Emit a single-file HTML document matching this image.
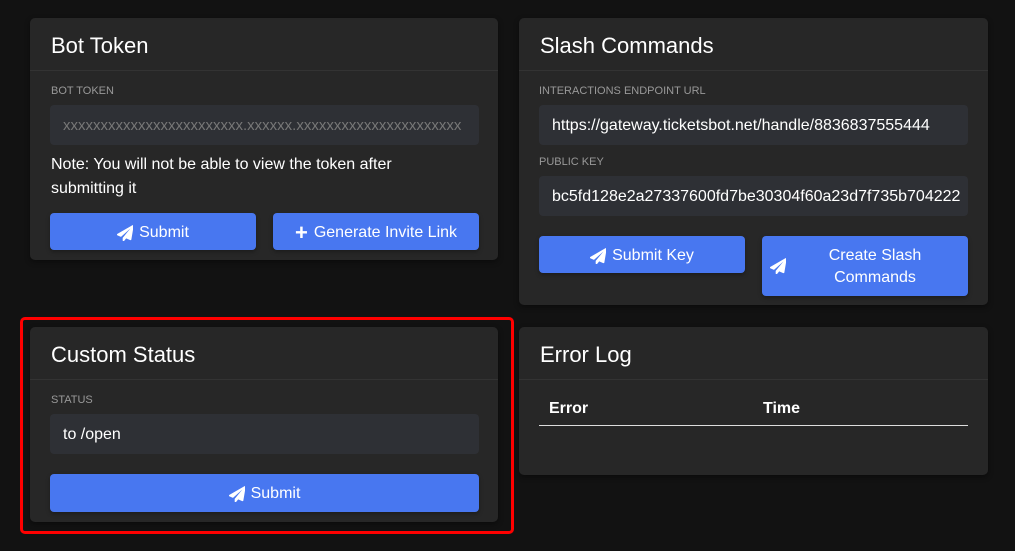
<!DOCTYPE html>
<html><head><style>
body{margin:0;width:1015px;height:551px;background:#121212;font-family:"Liberation Sans",sans-serif;color:#fff;position:relative;overflow:hidden}
.card{position:absolute;background:#272727;border-radius:5px;box-shadow:0 2px 6px rgba(0,0,0,.4)}
.hd{height:53px;border-bottom:1px solid #333;box-sizing:border-box;padding:15px 21px 0;font-size:22px}
.lab{position:absolute;font-size:11px;color:#999;text-transform:uppercase}
.inp{position:absolute;background:#2e3035;border-radius:4px;height:40px;box-sizing:border-box;padding:0 13px;line-height:42px;font-size:16px;white-space:nowrap;overflow:hidden}
.btn{position:absolute;background:#4877f0;border-radius:4px;display:flex;align-items:center;justify-content:center;font-size:16px;padding-top:2px;box-sizing:border-box;box-shadow:0 2px 4px rgba(0,0,0,.3)}
.btn svg{width:16px;height:16px;margin-right:6px}
</style></head><body>
<svg width="0" height="0" style="position:absolute"><defs><symbol id="pl" viewBox="0 0 512 512"><path fill="#fff" d="M498 5 12 285c-19 11-17 38 3 46l112 47 302-266-247 301v82c0 24 29 34 44 15l67-82 131 55c15 6 32-3 35-19L533 30C536 10 515-4 498 5z"/></symbol></defs></svg>

<div class="card" style="left:30px;top:18px;width:468px;height:242px">
<div class="hd">Bot Token</div>
<div class="lab" style="left:21px;top:67px">Bot Token</div>
<div class="inp" style="left:20px;top:87px;width:429px;color:#777;font-size:15px">xxxxxxxxxxxxxxxxxxxxxxxx.xxxxxx.xxxxxxxxxxxxxxxxxxxxxx</div>
<div style="position:absolute;left:21px;top:135px;font-size:16px;line-height:24px;width:400px">Note: You will not be able to view the token after submitting it</div>
<div class="btn" style="left:20px;top:195px;width:206px;height:37px"><svg><use href="#pl"/></svg>Submit</div>
<div class="btn" style="left:243px;top:195px;width:206px;height:37px"><span style="font-size:22px;font-weight:bold;margin-right:6px">+</span>Generate Invite Link</div>
</div>

<div class="card" style="left:519px;top:18px;width:469px;height:287px">
<div class="hd">Slash Commands</div>
<div class="lab" style="left:20px;top:67px">Interactions Endpoint URL</div>
<div class="inp" style="left:20px;top:87px;width:429px">https://gateway.ticketsbot.net/handle/8836837555444</div>
<div class="lab" style="left:20px;top:138px">Public Key</div>
<div class="inp" style="left:20px;top:158px;width:429px">bc5fd128e2a27337600fd7be30304f60a23d7f735b704222</div>
<div class="btn" style="left:20px;top:218px;width:206px;height:37px"><svg><use href="#pl"/></svg>Submit Key</div>
<div class="btn" style="left:243px;top:218px;width:206px;height:60px"><svg style="position:absolute;left:8px;top:22px"><use href="#pl"/></svg><span style="text-align:center;line-height:22px;margin-left:20px">Create Slash<br>Commands</span></div>
</div>

<div class="card" style="left:30px;top:327px;width:468px;height:195px">
<div class="hd">Custom Status</div>
<div class="lab" style="left:21px;top:67px">Status</div>
<div class="inp" style="left:20px;top:87px;width:429px">to /open</div>
<div class="btn" style="left:20px;top:147px;width:429px;height:38px"><svg><use href="#pl"/></svg>Submit</div>
</div>
<div style="position:absolute;left:20px;top:317px;width:488px;height:211px;border:3px solid #f00;border-radius:5px"></div>

<div class="card" style="left:519px;top:327px;width:469px;height:148px">
<div class="hd">Error Log</div>
<div style="position:absolute;left:30px;top:73px;font-weight:bold;font-size:16px">Error</div>
<div style="position:absolute;left:244px;top:73px;font-weight:bold;font-size:16px">Time</div>
<div style="position:absolute;left:20px;top:98px;width:429px;height:1px;background:#ddd"></div>
</div>
</body></html>
